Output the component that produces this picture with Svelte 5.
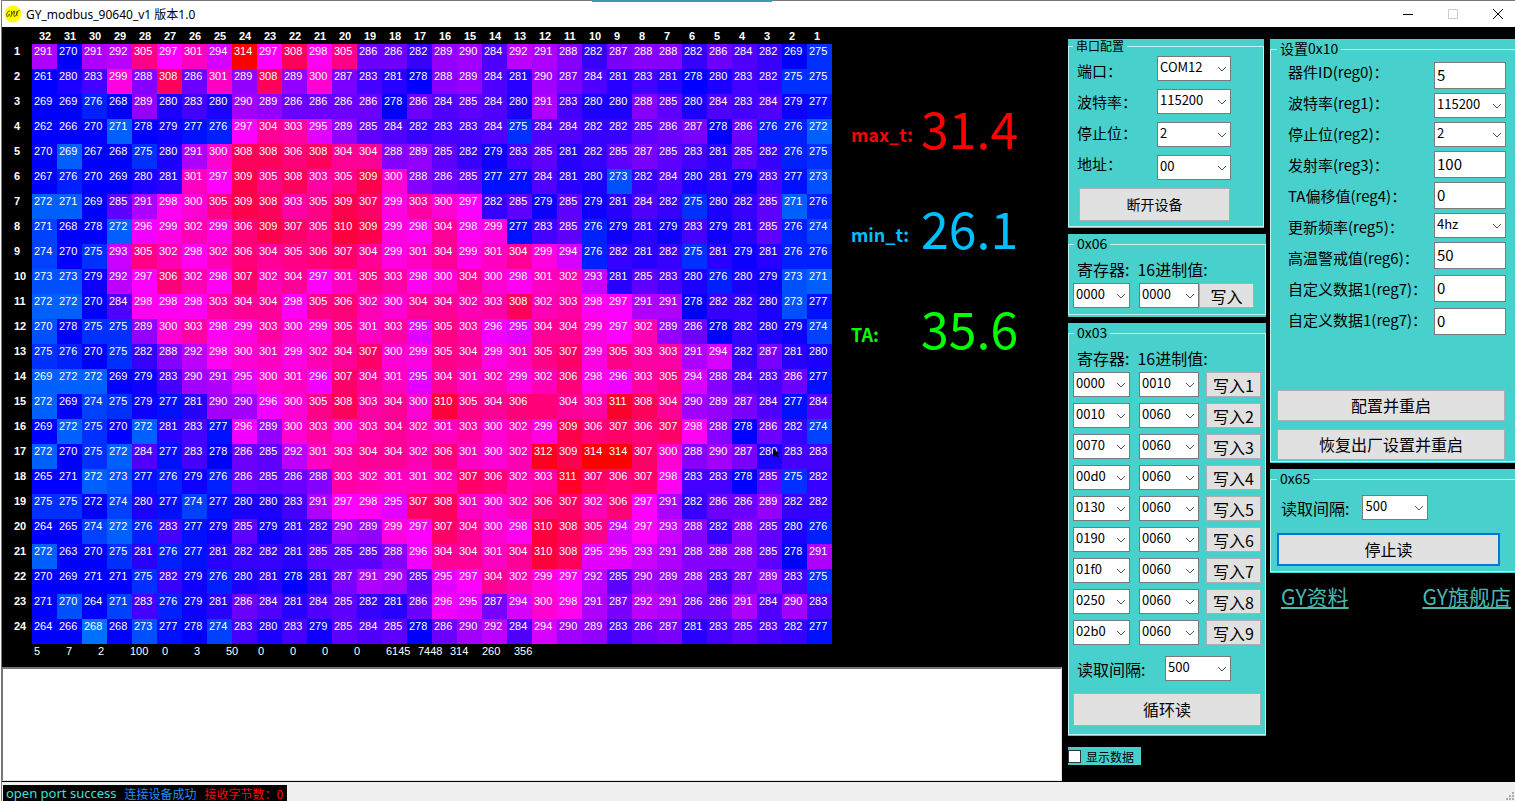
<script>
    const frame = `
291 270 291 292 305 297 301 294 314 297 308 298 305 286 286 282 289 290 284 292 291 288 282 287 288 288 282 286 284 282 269 275
261 280 283 299 288 308 286 301 289 308 289 300 287 283 281 278 288 289 284 281 290 287 284 281 283 281 278 280 283 282 275 275
269 269 276 268 289 280 283 280 290 289 286 286 286 286 278 286 284 285 284 280 291 283 280 280 288 285 280 284 283 284 279 277
262 266 270 271 278 279 277 276 297 304 303 295 289 285 284 282 283 283 284 275 284 284 282 282 285 286 287 278 286 276 276 272
270 269 267 268 275 280 291 300 308 308 306 308 304 304 288 289 285 282 279 283 285 281 282 285 287 285 283 281 285 282 276 275
267 276 270 269 280 281 301 297 309 305 308 303 305 309 300 288 286 285 277 277 284 281 280 273 282 284 280 281 279 283 277 273
272 271 269 285 291 298 300 305 309 308 303 305 309 307 299 303 300 297 282 285 279 285 279 281 284 282 275 280 282 285 271 276
271 268 278 272 296 299 302 299 306 309 307 305 310 309 299 298 304 298 299 277 283 285 276 279 281 279 283 279 281 285 276 274
274 270 275 293 305 302 298 302 306 304 305 306 307 304 299 301 304 299 301 304 299 294 276 282 281 282 275 281 279 281 276 276
273 273 279 292 297 306 302 298 307 302 304 297 301 305 303 298 300 304 300 298 301 302 293 281 285 283 280 276 280 279 273 271
272 272 270 284 298 298 298 303 304 304 298 305 306 302 300 304 304 302 303 308 302 303 298 297 291 291 278 282 282 280 273 277
270 278 275 275 289 300 303 298 299 303 300 299 305 301 303 295 305 303 296 295 304 304 299 297 302 289 286 278 282 280 279 274
275 276 270 275 282 288 292 298 300 301 299 302 304 307 300 299 305 304 299 301 305 307 299 305 303 303 291 294 282 287 281 280
269 272 272 269 279 283 290 291 295 300 301 296 307 304 301 295 304 301 302 299 302 306 298 296 303 305 294 288 284 283 286 277
272 269 274 275 279 277 281 290 290 296 300 305 308 303 304 300 310 305 304 306 --- 304 303 311 308 304 290 289 287 284 277 284
269 272 275 270 272 281 283 277 296 289 300 303 300 303 304 302 301 303 300 302 299 309 306 307 306 307 298 288 278 286 282 274
272 270 275 272 284 277 283 278 286 285 292 301 303 304 304 302 306 301 300 302 312 309 314 314 307 300 288 290 287 280 283 283
265 271 272 273 277 276 279 276 286 285 286 288 303 302 301 301 302 307 306 302 303 311 307 306 307 298 283 283 278 285 275 282
275 275 272 274 280 277 274 277 280 280 283 291 297 298 295 307 308 301 300 302 306 307 302 306 297 291 282 286 286 289 282 282
264 265 274 272 276 283 277 279 285 279 281 282 290 289 299 297 307 304 300 298 310 308 305 294 297 293 288 282 288 285 280 276
272 263 270 275 281 276 277 281 282 282 281 285 285 285 288 296 304 304 301 304 310 308 295 295 293 291 288 288 288 285 278 291
270 269 271 271 275 282 279 276 280 281 278 281 287 291 290 285 295 297 304 302 299 297 292 285 290 289 288 283 287 289 283 275
271 270 264 271 283 276 279 281 286 284 281 284 285 282 281 286 296 295 287 294 300 298 291 287 292 291 286 286 291 284 290 283
264 266 268 268 273 277 278 274 283 280 283 279 285 284 285 278 286 290 292 284 294 290 289 283 286 287 281 283 285 283 282 277`
        .trim().split('\n').map((line) => line.split(' '));

    // Cells whose colour is one sample ahead of their number, as row-column
    const pending = {
        '4-29': 272, '5-31': 272, '7-31': 272, '7-2': 272, '8-32': 274,
        '10-1': 272, '12-32': 273, '14-32': 272, '15-12': 306, '19-30': 278,
        '23-31': 273, '23-29': 274, '24-30': 271
    };

    const columns = Array.from({ length: 32 }, (_, i) => 32 - i);
    const registers = [5, 7, 2, 100, 0, 3, 50, 0, 0, 0, 0, 6145, 7448, 314, 260, 356];

    let readings = [
        { label: 'max_t:', value: '31.4', kind: 'max' },
        { label: 'min_t:', value: '26.1', kind: 'min' },
        { label: 'TA:', value: '35.6', kind: 'ambient' }
    ];

    let port = [
        { id: 'port', label: '端口：', value: 'COM12' },
        { id: 'baud', label: '波特率：', value: '115200' },
        { id: 'stop', label: '停止位：', value: '2' },
        { id: 'addr', label: '地址：', value: '00' }
    ];

    let settings = [
        { label: '器件ID(reg0)：', value: '5' },
        { label: '波特率(reg1)：', value: '115200', select: true },
        { label: '停止位(reg2)：', value: '2', select: true },
        { label: '发射率(reg3)：', value: '100' },
        { label: 'TA偏移值(reg4)：', value: '0' },
        { label: '更新频率(reg5)：', value: '4hz', select: true },
        { label: '高温警戒值(reg6)：', value: '50' },
        { label: '自定义数据1(reg7)：', value: '0' },
        { label: '自定义数据1(reg7)：', value: '0' }
    ];

    let writes = [
        ['0000', '0010'], ['0010', '0060'], ['0070', '0060'],
        ['00d0', '0060'], ['0130', '0060'], ['0190', '0060'],
        ['01f0', '0060'], ['0250', '0060'], ['02b0', '0060']
    ];

    let log = '';
    let showData = false;

    // light blue -> blue -> magenta -> red
    let heat = (text, row, col) => {
        const shown = pending[`${row}-${col}`];
        const t = shown ?? Number(text);
        if (t < 272 && !shown) return 'rgb(0, 0, 255)';
        if (t < 278) return `rgb(0, ${(278 - t) * 16}, 255)`;
        if (t < 297) return `rgb(${Math.round((t - 278) * 13.4)}, 0, 255)`;
        return `rgb(255, 0, ${(314 - t) * 15})`;
    };
</script>

{#snippet combo(value, id, name)}
    <span class="combo">
        <select {id} aria-label={name}>
            <option>{value}</option>
        </select>
        <svg viewBox="0 0 10 6" width="10" height="6" aria-hidden="true">
            <path d="M1 1l4 4 4-4" fill="none" stroke="#555" />
        </svg>
    </span>
{/snippet}

<div class="window">
    <header>
        <svg class="logo" viewBox="0 0 18 18" width="18" height="18">
            <circle cx="9" cy="9" r="8.5" fill="#ff0" />
            <path d="M6 6.2C3.8 5.6 2 9.4 3 11.2c1 1 2.3-.6 2.7-2L4.5 9.3M7.4 6l.4 3.2 2.3-3.4M7.8 9.2l-1.2 3M11 6c-1.2 3-1.7 5.5-.4 5.5 1.5 0 2.2-3 2.7-5.5-.5 2.4-.8 4.6.2 5.2M14 6l1.500-.4"
                fill="none" stroke="#4a4a10" />
        </svg>
        <h1>GY_modbus_90640_v1 版本1.0</h1>
        <div class="controls">
            <button aria-label="最小化">
                <svg viewBox="0 0 12 12" width="12" height="12"><path d="M1 6.5h10" stroke="#000" /></svg>
            </button>
            <button aria-label="最大化" disabled>
                <svg viewBox="0 0 12 12" width="12" height="12"><path d="M1.5 1.5h9v9h-9z" fill="none" stroke="#ccc" /></svg>
            </button>
            <button aria-label="关闭">
                <svg viewBox="0 0 12 12" width="12" height="12"><path d="M1 1l10 10M11 1L1 11" stroke="#000" /></svg>
            </button>
        </div>
        <div class="tab"></div>
    </header>

    <main>
        <div class="monitor">
            <div class="view">
                <div>
                    <table>
                        <thead>
                            <tr>
                                <td></td>
                                {#each columns as col}
                                    <th scope="col">{col}</th>
                                {/each}
                            </tr>
                        </thead>
                        <tbody>
                            {#each frame as line, r}
                                <tr>
                                    <th scope="row">{r + 1}</th>
                                    {#each line as t, c}
                                        <td style="background: {heat(t, r + 1, 32 - c)}">
                                            {t === '---' ? '' : t}
                                            {#if r === 16 && c === 29}
                                                <svg class="pointer" viewBox="0 0 8 8" width="8" height="8">
                                                    <path d="M1 0l6 4-2 1 2 3-2 0-1-2-3 2z" fill="#000" />
                                                </svg>
                                            {/if}
                                        </td>
                                    {/each}
                                </tr>
                            {/each}
                        </tbody>
                    </table>
                    <div class="registers">
                        {#each registers as value}
                            <span>{value}</span>
                        {/each}
                    </div>
                </div>
                <div class="readings">
                    {#each readings as reading}
                        <div class="reading {reading.kind}">
                            <span class="name">{reading.label}</span>
                            <span class="value">{reading.value}</span>
                        </div>
                    {/each}
                </div>
            </div>
            <textarea aria-label="数据" bind:value={log}></textarea>
        </div>

        <div class="side">
            <section class="port">
                <fieldset>
                    <legend>串口配置</legend>
                    <div class="form">
                        <div class="labels">
                            {#each port as item}
                                <label for={item.id}>{item.label}</label>
                            {/each}
                        </div>
                        <div class="fields">
                            {#each port as item}
                                {@render combo(item.value, item.id)}
                            {/each}
                        </div>
                    </div>
                    <button>断开设备</button>
                </fieldset>
            </section>

            <section class="single">
                <fieldset>
                    <legend>0x06</legend>
                    <div class="heads"><span>寄存器:</span><span>16进制值:</span></div>
                    <div class="write">
                        {@render combo('0000', 'reg', '寄存器')}
                        {@render combo('0000', 'hex', '16进制值')}
                        <button>写入</button>
                    </div>
                </fieldset>
            </section>

            <section class="multi">
                <fieldset>
                    <legend>0x03</legend>
                    <div class="heads"><span>寄存器:</span><span>16进制值:</span></div>
                    {#each writes as [reg, hex], i}
                        <div class="write">
                            {@render combo(reg, `reg${i}`, `寄存器${i + 1}`)}
                            {@render combo(hex, `hex${i}`, `16进制值${i + 1}`)}
                            <button>写入{i + 1}</button>
                        </div>
                    {/each}
                    <div class="interval">
                        <label for="loop">读取间隔:</label>
                        {@render combo('500', 'loop')}
                    </div>
                    <button class="wide">循环读</button>
                </fieldset>
            </section>

            <label class="check"><input type="checkbox" bind:checked={showData} />显示数据</label>
        </div>

        <div class="config">
            <section class="settings">
                <fieldset>
                    <legend>设置0x10</legend>
                    <div class="form">
                        <div class="labels">
                            {#each settings as item, i}
                                <label for="set{i}">{item.label}</label>
                            {/each}
                        </div>
                        <div class="fields">
                            {#each settings as item, i}
                                {#if item.select}
                                    {@render combo(item.value, `set${i}`)}
                                {:else}
                                    <input id="set{i}" type="text" bind:value={item.value} />
                                {/if}
                            {/each}
                        </div>
                    </div>
                    <div class="actions">
                        <button>配置并重启</button>
                        <button>恢复出厂设置并重启</button>
                    </div>
                </fieldset>
            </section>

            <section class="reader">
                <fieldset>
                    <legend>0x65</legend>
                    <div class="interval">
                        <label for="poll">读取间隔:</label>
                        {@render combo('500', 'poll')}
                    </div>
                    <button class="active">停止读</button>
                </fieldset>
            </section>

            <nav>
                <a href="#docs">GY资料</a>
                <a href="#shop">GY旗舰店</a>
            </nav>
        </div>
    </main>

    <footer>
        <div class="status">
            <span class="opened">open port success</span>
            <span class="connected">连接设备成功</span>
            <span class="received">接收字节数：0</span>
        </div>
        <svg class="grip" viewBox="0 0 9 9" width="9" height="9">
            <path d="M6 0h2v2H6zM3 3h2v2H3zM6 3h2v2H6zM0 6h2v2H0zM3 6h2v2H3zM6 6h2v2H6z" fill="#aaa" />
        </svg>
    </footer>
</div>

<style>
    :global(body) {
        margin: 0;
        background: #fff;
    }
    .window {
        --teal: #48d1cc;
        box-sizing: border-box;
        min-height: 100vh;
        display: flex;
        flex-direction: column;
        margin-left: 1px;
        border-left: 1px solid #777;
        background: #000;
        font-family: "Noto Sans CJK SC", sans-serif;
        font-size: 15px;
        color: #000;
    }

    header {
        position: relative;
        box-sizing: border-box;
        height: 27px;
        display: flex;
        align-items: center;
        padding-left: 2px;
        background: #fff;
        border-top: 1px solid #777;
    }
    .tab {
        position: absolute;
        top: -1px;
        left: 39%;
        width: 180px;
        height: 2px;
        background: #3a9ab5;
    }
    h1 {
        margin: 0 auto 0 4px;
        font: 12px "Noto Sans", "Noto Sans CJK SC", sans-serif;
    }
    .controls {
        display: flex;
    }
    .controls button {
        width: 45px;
        height: 26px;
        display: flex;
        align-items: center;
        justify-content: center;
        padding: 0 0 0 10px;
        background: none;
        border: none;
    }

    main {
        flex: 1;
        display: flex;
    }
    .monitor {
        flex: 1;
        display: flex;
        flex-direction: column;
    }
    .view {
        display: flex;
        color: #fff;
    }
    table {
        border-collapse: collapse;
        font: 11px/15px "Liberation Sans", Arial, sans-serif;
    }
    td, th {
        position: relative;
        box-sizing: border-box;
        min-width: 25px;
        height: 25px;
        padding: 0 0 0 2px;
        vertical-align: top;
        text-align: left;
    }
    thead td, thead th {
        height: 17px;
        padding: 2px 0 0 7px;
    }
    tbody th {
        width: 30px;
        padding-left: 12px;
    }
    .pointer {
        position: absolute;
        right: 2px;
        top: 5px;
    }
    .registers {
        display: flex;
        height: 23px;
        padding-left: 32px;
        font: 11px/15px "Liberation Sans", Arial, sans-serif;
    }
    .registers span {
        width: 32px;
    }
    .readings {
        padding: 50px 0 0 19px;
    }
    .reading {
        display: flex;
        align-items: center;
        height: 100px;
    }
    .name {
        width: 70px;
        padding-top: 14px;
        font-size: 18px;
        font-weight: bold;
    }
    .value {
        font-size: 50px;
        line-height: 60px;
    }
    .max { color: #f00; }
    .min { color: #00bfff; }
    .ambient { color: #0f0; }
    textarea {
        flex: 1;
        box-sizing: border-box;
        width: 100%;
        min-height: 80px;
        resize: none;
        border: 1px solid #e3e3e3;
        border-top: 2px solid #777;
        border-left-color: #777;
        margin-bottom: 1px;
    }

    .side {
        width: 198px;
        padding: 12px 4px 0 6px;
    }
    .config {
        width: 245px;
        padding-top: 12px;
    }
    section {
        background: var(--teal);
        padding-bottom: 1px;
        margin-bottom: 6px;
    }
    fieldset {
        box-sizing: border-box;
        min-width: 0;
        margin: 0;
        padding: 0 4px;
        border: 1px solid #c4f0ee;
    }
    legend {
        height: 20px;
        margin-left: 1px;
        padding: 0 3px;
        font-size: 14px;
        line-height: 18px;
    }
    button {
        box-sizing: border-box;
        padding: 0 0 2px;
        background: #e1e1e1;
        border: 1px solid #adadad;
        color: #000;
        font-family: inherit;
        font-size: 16px;
    }
    .combo {
        position: relative;
        display: block;
        height: 25px;
    }
    .combo svg {
        position: absolute;
        right: 4px;
        top: 10px;
        pointer-events: none;
    }
    select, input[type="text"] {
        box-sizing: border-box;
        display: block;
        width: 100%;
        height: 25px;
        padding: 0 0 4px 2px;
        appearance: none;
        background: #fff;
        border: 1px solid #7a7a7a;
        border-radius: 0;
        color: #000;
        font-family: inherit;
        font-size: 13px;
    }
    input[type="text"] {
        height: 27px;
        padding-bottom: 2px;
        font-size: 15px;
    }
    .form {
        display: flex;
        justify-content: space-between;
    }
    .labels, .fields {
        display: flex;
        flex-direction: column;
    }
    .labels label {
        height: 31px;
        white-space: nowrap;
    }

    .port {
        margin-right: 2px;
    }
    .port legend {
        height: 14px;
        margin-left: 0;
        font-size: 12px;
        line-height: 14px;
    }
    .port fieldset {
        padding: 3px 32px 5px 4px;
    }
    .port .labels {
        padding-left: 4px;
        line-height: 29px;
    }
    .port .fields {
        width: 74px;
        gap: 8px;
    }
    .port button {
        width: 151px;
        height: 33px;
        margin: 8px 0 0 6px;
        font-size: 14px;
    }
    .heads {
        display: flex;
        gap: 8px;
        padding: 4px 0 0 4px;
        font-size: 16px;
        line-height: 22px;
        margin-bottom: 3px;
    }
    .write {
        display: grid;
        grid-template-columns: 57px 60px 55px;
        column-gap: 9px;
        margin-bottom: 6px;
    }
    .write button {
        height: 25px;
        margin-left: -2px;
        margin-right: 2px;
    }
    .single {
        padding-bottom: 2px;
    }
    .single .write button {
        margin-left: -9px;
        margin-right: 9px;
    }
    .multi fieldset {
        padding-bottom: 8px;
    }
    .interval {
        display: flex;
        align-items: center;
        font-size: 16px;
    }
    .interval .combo {
        width: 66px;
    }
    .multi .interval {
        justify-content: space-between;
        padding: 5px 30px 0 4px;
    }
    .wide {
        width: 100%;
        height: 33px;
        margin-top: 12px;
    }
    .check {
        display: inline-flex;
        align-items: center;
        height: 18px;
        margin-top: 5px;
        padding-right: 7px;
        background: var(--teal);
        font-size: 12px;
    }
    .check input {
        width: 13px;
        height: 13px;
        margin: 0 5px 0 0;
        appearance: none;
        background: #fff;
        border: 1px solid #333;
    }
    .check input:checked {
        background: #333;
    }

    .config fieldset {
        padding: 0 6px 2px;
        border-right: none;
    }
    .config legend {
        margin-left: 0;
    }
    .settings .form {
        padding: 0 3px 0 11px;
    }
    .settings .labels {
        line-height: 25px;
    }
    .settings .fields {
        width: 72px;
        gap: 4px;
        padding-top: 3px;
    }
    .settings input:nth-last-child(-n + 2) {
        margin-top: 2px;
    }
    .actions {
        display: flex;
        flex-direction: column;
        gap: 8px;
        margin-top: 52px;
        padding-right: 4px;
    }
    .actions button {
        height: 31px;
    }
    .settings fieldset {
        padding-bottom: 1px;
    }
    .reader .interval {
        gap: 13px;
        padding: 6px 0 0 4px;
    }
    .reader fieldset {
        padding-bottom: 5px;
    }
    .active {
        width: 223px;
        height: 33px;
        margin-top: 13px;
        border: 2px solid #0078d7;
    }
    nav {
        display: flex;
        justify-content: space-between;
        padding: 1px 4px 0 11px;
    }
    a {
        color: #48b8b0;
        font-size: 21px;
        line-height: 32px;
    }

    footer {
        display: flex;
        align-items: flex-end;
        justify-content: space-between;
        height: 19px;
        background: #f0f0f0;
    }
    .status {
        display: flex;
        gap: 8px;
        height: 16px;
        margin-left: 1px;
        padding: 0 4px 0 3px;
        background: #000;
        font: 12px/17px "Noto Sans CJK SC", sans-serif;
    }
    .opened {
        color: #40e0d0;
        font-family: "Noto Sans", sans-serif;
        font-size: 13px;
    }
    .connected { color: #1e90ff; }
    .received { color: #f00; }
</style>
